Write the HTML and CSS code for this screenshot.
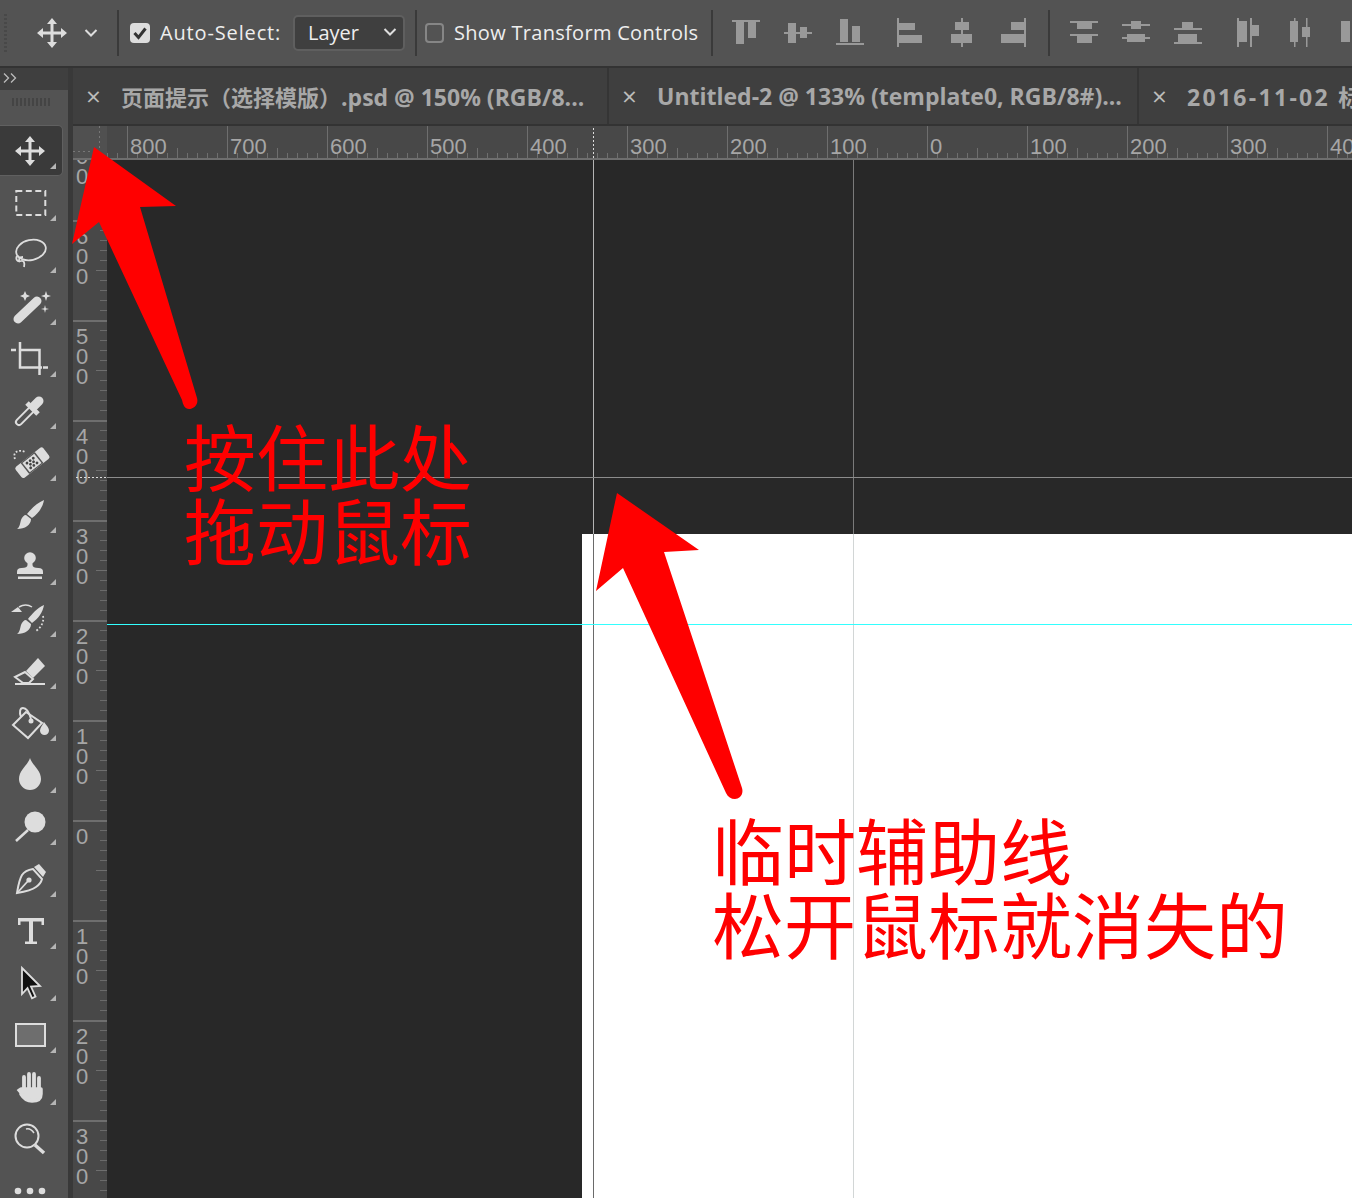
FILE: index.html
```html
<!DOCTYPE html>
<html lang="zh-CN">
<head>
    <meta charset="UTF-8">
    <meta name="viewport" content="width=device-width, initial-scale=1.0">
    <title>Photoshop guides</title>
    <link rel="stylesheet" href="styles.css">
</head>
<body>
<div class="app">

    <!-- options bar -->
    <div class="options">
        <div class="grip"></div>
        <svg class="opt-move" viewBox="0 0 30 30"><path d="M15 0l5 6h-3.500v7.500H24V10l6 5-6 5v-3.500h-7.500V24H20l-5 6-5-6h3.500v-7.500H6V20l-6-5 6-5v3.500h7.500V6H10z"/></svg>
        <svg class="opt-chevron" viewBox="0 0 14 10"><path d="M1.500 2l5.500 5.500L12.500 2" fill="none" stroke="#ddd" stroke-width="2"/></svg>
        <div class="sep sep-a"></div>
        <div class="check check-on"><svg viewBox="0 0 20 20"><path d="M4.500 10l4 4.500 7-9" fill="none" stroke="#333" stroke-width="3"/></svg></div>
        <span class="opt-label auto-label">Auto-Select:</span>
        <div class="select">
            <span>Layer</span>
            <svg viewBox="0 0 14 10"><path d="M1.500 2l5.500 5.500L12.500 2" fill="none" stroke="#ddd" stroke-width="2"/></svg>
        </div>
        <div class="sep sep-b"></div>
        <div class="check"></div>
        <span class="opt-label transform-label">Show Transform Controls</span>
        <div class="sep sep-c"></div>

        <div class="align-group group-a">
            <svg viewBox="0 0 30 30"><rect x="1" y="2" width="28" height="2"/><rect x="5" y="4" width="8" height="22"/><rect x="17" y="4" width="8" height="16"/></svg>
            <svg viewBox="0 0 30 30"><rect x="1" y="14" width="28" height="2"/><rect x="5" y="5" width="8" height="20"/><rect x="17" y="9" width="7" height="11"/></svg>
            <svg viewBox="0 0 30 30"><rect x="1" y="25" width="28" height="2"/><rect x="5" y="1" width="8" height="23"/><rect x="17" y="8" width="8" height="16"/></svg>
        </div>
        <div class="align-group group-b">
            <svg viewBox="0 0 30 30"><rect x="1" y="0" width="2" height="29"/><rect x="3" y="5" width="16" height="7"/><rect x="3" y="17" width="23" height="8"/></svg>
            <svg viewBox="0 0 30 30"><rect x="13" y="0" width="2" height="29"/><rect x="7" y="4" width="14" height="8"/><rect x="3" y="16" width="21" height="9"/></svg>
            <svg viewBox="0 0 30 30"><rect x="24" y="0" width="2" height="29"/><rect x="11" y="4" width="13" height="8"/><rect x="1" y="16" width="23" height="9"/></svg>
        </div>
        <div class="sep sep-d"></div>
        <div class="align-group group-c">
            <svg viewBox="0 0 30 30"><rect x="1" y="3" width="28" height="2"/><rect x="1" y="16" width="28" height="2"/><rect x="8" y="5" width="15" height="6"/><rect x="8" y="18" width="15" height="7"/></svg>
            <svg viewBox="0 0 30 30"><rect x="1" y="6" width="28" height="2"/><rect x="1" y="19" width="28" height="2"/><rect x="10" y="3" width="10" height="8"/><rect x="6" y="16" width="18" height="8"/></svg>
            <svg viewBox="0 0 30 30"><rect x="1" y="10" width="28" height="2"/><rect x="1" y="24" width="28" height="2"/><rect x="9" y="4" width="11" height="6"/><rect x="5" y="16" width="19" height="8"/></svg>
        </div>
        <div class="align-group group-d">
            <svg viewBox="0 0 30 30"><rect x="0" y="0" width="2" height="29"/><rect x="13" y="0" width="2" height="29"/><rect x="2" y="3" width="8" height="21"/><rect x="15" y="7" width="7" height="11"/></svg>
            <svg viewBox="0 0 30 30"><rect x="5" y="0" width="1.500" height="29"/><rect x="17" y="0" width="1.500" height="29"/><rect x="1" y="3" width="8" height="21"/><rect x="13" y="9" width="8" height="10"/></svg>
            <svg viewBox="0 0 30 30"><rect x="0" y="3" width="9" height="21"/></svg>
        </div>
    </div>

    <div class="main">
        <!-- tool column -->
        <div class="tools">
            <div class="tools-head"><svg viewBox="0 0 14 10"><path d="M1 .5L5.500 5 1 9.500M8 .5L12.500 5 8 9.500" fill="none" stroke="#bbb" stroke-width="1.300"/></svg></div>
            <div class="tools-grip"><div></div></div>

            <div class="tool active">
                <svg viewBox="0 0 40 40"><path d="M20 5l5 6h-3.500v7.500H29V15l6 5-6 5v-3.500h-7.500V29H25l-5 6-5-6h3.500v-7.500H11V25l-6-5 6-5v3.500h7.500V11H15z"/></svg>
            </div>
            <div class="tool">
                <svg viewBox="0 0 40 40"><rect x="6.300" y="8" width="29" height="24" fill="none" stroke="#ddd" stroke-width="2" stroke-dasharray="6 3.500"/></svg>
            </div>
            <div class="tool">
                <svg viewBox="0 0 40 40"><g fill="none" stroke="#ddd" stroke-width="1.800"><ellipse cx="21" cy="15" rx="15" ry="10" transform="rotate(-12 21 15)"/><path d="M7 21c-2 4 1 6 4 5s4 2 3 6M13 22c-4 0-5 3-3 5"/></g></svg>
            </div>
            <div class="tool">
                <svg viewBox="0 0 40 40"><path d="M8 32L27 14" fill="none" stroke="#ddd" stroke-width="9" stroke-linecap="round"/><path d="M15 4l1.500 3.500L20 9l-3.500 1.500L15 14l-1.500-3.500L10 9l3.500-1.500zM36 4l1.200 3.800 3.800 1.200-3.800 1.200L36 14l-1.200-3.800L31 9l3.800-1.200zM35 18l.8 3.200 3.200.8-3.200.8-.8 3.200-.8-3.200-3.200-.8 3.200-.8z"/></svg>
            </div>
            <div class="tool">
                <svg viewBox="0 0 40 40"><g fill="none" stroke="#ddd" stroke-width="2.500"><path d="M10 3v25.500h22M1 11h5M10 11h19.500v25M33 28.500h5"/></g></svg>
            </div>
            <div class="tool">
                <svg viewBox="0 0 40 40"><path d="M9 31L22 18" fill="none" stroke="#ddd" stroke-width="8" stroke-linecap="round"/><path d="M9 31L22 18" fill="none" stroke="#535353" stroke-width="4" stroke-linecap="round"/><path d="M17 12L28 23" fill="none" stroke="#ddd" stroke-width="5"/><path d="M24 15L29 10" fill="none" stroke="#ddd" stroke-width="9" stroke-linecap="round"/></svg>
            </div>
            <div class="tool">
                <svg viewBox="0 0 40 40"><g transform="rotate(-38 22 20)"><rect x="5" y="13" width="35" height="14" rx="2.500"/><rect x="13" y="13" width="18" height="14" fill="#535353"/><rect x="14.500" y="14" width="15" height="12" fill="#ddd"/><g fill="#444"><circle cx="18" cy="17" r="1.400"/><circle cx="22" cy="17" r="1.400"/><circle cx="26" cy="17" r="1.400"/><circle cx="18" cy="23" r="1.400"/><circle cx="22" cy="23" r="1.400"/><circle cx="26" cy="23" r="1.400"/><circle cx="20" cy="20" r="1.400"/><circle cx="24" cy="20" r="1.400"/></g></g><path d="M5 16C2 9 9 6 15 9" fill="none" stroke="#ddd" stroke-width="1.800" stroke-dasharray="1.800 1.800"/></svg>
            </div>
            <div class="tool">
                <svg viewBox="0 0 40 40"><path d="M34 5c-1 7-6 14-12 18l-5-4c4-5 10-11 17-14zM16 20l5 4c0 6-6 10-14 10 3-2 3-6 4-9 1-3 3-5 5-5z"/></svg>
            </div>
            <div class="tool">
                <svg viewBox="0 0 40 40"><circle cx="20" cy="11" r="5.800"/><path d="M17.500 14h5v4c0 2 2 3 6 3 3 0 4.500 1 4.500 4v2H7v-2c0-3 1.500-4 4.500-4 4 0 6-1 6-3z"/><rect x="8" y="29.500" width="24" height="2.500"/></svg>
            </div>
            <div class="tool">
                <svg viewBox="0 0 40 40"><path d="M34 6c-1 7-6 14-12 18l-4-4c4-5 9-11 16-14zM16 21l5 4c0 6-6 10-14 10 3-2 3-6 4-9 1-3 3-5 5-5z"/><path d="M1 13h11l-4-5z"/><path d="M9 8c5-3 10-2 13 0" fill="none" stroke="#ddd" stroke-width="1.500"/><path d="M33 17c1 5-1 11-7 15" fill="none" stroke="#ddd" stroke-width="1.800" stroke-dasharray="1.800 2"/></svg>
            </div>
            <div class="tool">
                <svg viewBox="0 0 40 40"><path d="M28 7l7 8-12 12-7-7z"/><path d="M15 21l8 7-4 4H13l-8-6z" fill="none" stroke="#ddd" stroke-width="2"/><rect x="5" y="32" width="30" height="2"/></svg>
            </div>
            <div class="tool">
                <svg viewBox="0 0 40 40"><path d="M16 9L3 22l15 13 14-15z" fill="none" stroke="#ddd" stroke-width="2"/><path d="M11 14c-2-5-1-9 2-9s6 4 8 11" fill="none" stroke="#ddd" stroke-width="2"/><circle cx="21" cy="18" r="2.500"/><path d="M34 19c3 4 5 6 5 8.500a4.500 4.500 0 0 1-9 0c0-2.500 2-4.500 4-8.500z"/></svg>
            </div>
            <div class="tool">
                <svg viewBox="0 0 40 40"><path d="M20 3c2 7 11 12 11 21a11 11 0 0 1-22 0c0-9 9-14 11-21z"/></svg>
            </div>
            <div class="tool">
                <svg viewBox="0 0 40 40"><circle cx="25" cy="15" r="10.500"/><path d="M18 23L6 34" fill="none" stroke="#ddd" stroke-width="2.500"/></svg>
            </div>
            <div class="tool">
                <svg viewBox="0 0 40 40"><path d="M23 10C17 11 14 13 12 16 9 21 8 28 7 34 13 33 22 31 26 28 29 26 31 24 32 20z" fill="none" stroke="#ddd" stroke-width="2"/><path d="M8 33L18 22" stroke="#ddd" stroke-width="1.800"/><circle cx="19" cy="21" r="2.600"/><path d="M24 8l5-3 7 8-3 5z"/></svg>
            </div>
            <div class="tool">
                <svg viewBox="0 0 40 40"><path d="M8 7h26v7h-2.500v-3.500H23v20h4V33H15v-2.500h4v-20h-8.500V14H8z"/></svg>
            </div>
            <div class="tool">
                <svg viewBox="0 0 40 40"><path d="M12 5l18 18-9 .6 4.500 10-3.500 1.600-4.500-10L12 31z" fill="#111" stroke="#ddd" stroke-width="1.800"/></svg>
            </div>
            <div class="tool">
                <svg viewBox="0 0 40 40"><rect x="6" y="9" width="29" height="22" fill="#6e6e6e" stroke="#ddd" stroke-width="2"/></svg>
            </div>
            <div class="tool">
                <svg viewBox="0 0 40 40"><path d="M14 10v12M19 7v15M24 7v15M29 11v13" fill="none" stroke="#ddd" stroke-width="3.800" stroke-linecap="round"/><path d="M8 22l5 6M11 22H31V27C31 32 27 34 22 34 17 34 14 32 11 27z" stroke="#ddd" stroke-width="3.500" stroke-linejoin="round"/></svg>
            </div>
            <div class="tool">
                <svg viewBox="0 0 40 40"><g fill="none" stroke="#ddd"><circle cx="17" cy="17" r="11.500" stroke-width="2"/><path d="M25 26l9 8" stroke-width="3.500"/><path d="M16 10c3-1 6 1 8 4" stroke-width="1.500"/></g></svg>
            </div>
            <div class="tool">
                <svg viewBox="0 0 40 40"><circle cx="8" cy="20" r="3.300"/><circle cx="20" cy="20" r="3.300"/><circle cx="32" cy="20" r="3.300"/></svg>
            </div>
        </div>
        <div class="divider"></div>

        <div class="workspace">
            <div class="tabs">
                <div class="tab tab-a"><span class="tab-x">&times;</span><span class="tab-title"><span class="tab-cjk">页面提示（选择模版）</span>.psd @ 150% (RGB/8...</span></div>
                <div class="tab tab-b"><span class="tab-x">&times;</span><span class="tab-title">Untitled-2 @ 133% (template0, RGB/8#)...</span></div>
                <div class="tab tab-c"><span class="tab-x">&times;</span><span class="tab-title">2016-11-02 标</span></div>
            </div>

            <div class="ruler-row">
                <div class="ruler-corner"></div>
                <div class="ruler-top">
                    <div class="mark"></div><div class="mark">800</div><div class="mark">700</div>
                    <div class="mark">600</div><div class="mark">500</div><div class="mark">400</div>
                    <div class="mark">300</div><div class="mark">200</div><div class="mark">100</div>
                    <div class="mark">0</div><div class="mark">100</div><div class="mark">200</div>
                    <div class="mark">300</div><div class="mark">400</div>
                </div>
            </div>

            <div class="canvas-row">
                <div class="ruler-left">
                    <div class="vmark"><span>700</span></div><div class="vmark"><span>600</span></div>
                    <div class="vmark"><span>500</span></div><div class="vmark"><span>400</span></div>
                    <div class="vmark"><span>300</span></div><div class="vmark"><span>200</span></div>
                    <div class="vmark"><span>100</span></div><div class="vmark"><span>0</span></div>
                    <div class="vmark"><span>100</span></div><div class="vmark"><span>200</span></div>
                    <div class="vmark"><span>300</span></div>
                </div>
                <div class="canvas">
                    <div class="doc"></div>
                </div>
            </div>
        </div>
    </div>

    <!-- guides and annotations sit over everything -->
    <div class="guide guide-v1"></div>
    <div class="guide guide-v2"></div>
    <div class="guide guide-h1"></div>
    <div class="guide guide-h2"></div>
    <div class="dots dots-top"></div>
    <div class="dots dots-left"></div>

    <svg class="arrows" viewBox="0 0 1352 1198">
        <path d="M94 147L176 206L140 207L197 398C199 405 193 409 189 409C185 409 183 405 182 400L99 222L72 244Z"/>
        <path d="M617 493L699 550L664 552L742 788C744 795 739 799 735 799C731 799 728 797 726 793L623 568L596 591Z"/>
    </svg>
    <div class="note note-a">按住此处<br>拖动鼠标</div>
    <div class="note note-b">临时辅助线<br>松开鼠标就消失的</div>
</div>
</body>
</html>
```

FILE: styles.css
```css
* {
    box-sizing: border-box;
}
body {
    margin: 0;
    background-color: #282828;
    font-family: "Open Sans", "Noto Sans CJK SC", sans-serif;
}
svg {
    display: block;
    flex-shrink: 0;
}
.app {
    position: relative;
    width: 1352px;
    height: 1198px;
    overflow: hidden;
}

/* options bar */
.options {
    display: flex;
    align-items: center;
    height: 68px;
    border-bottom: 2px solid #333;
    background-color: #535353;
    color: #eee;
    overflow: hidden;
}
.options > * {
    flex-shrink: 0;
}
.options svg {
    fill: #999;
}
.grip {
    width: 3px;
    height: 38px;
    margin-left: 4px;
    background: repeating-linear-gradient(#484848 0 2px, transparent 2px 4px);
}
.opt-move {
    width: 30px;
    height: 30px;
    margin-left: 30px;
}
.options .opt-move {
    fill: #ddd;
}
.opt-chevron {
    width: 14px;
    height: 10px;
    margin-left: 17px;
}
.sep {
    width: 2px;
    height: 46px;
    background-color: #3a3a3a;
}
.sep-a { margin-left: 19px; }
.sep-b { margin-left: 10px; }
.sep-c { margin-left: 13px; }
.sep-d { margin-left: 18px; }
.check {
    width: 19px;
    height: 20px;
    margin-left: 8px;
    border: 2px solid #868686;
    border-radius: 4px;
}
.check-on {
    width: 20px;
    margin-left: 11px;
    border: 0;
    background-color: #ddd;
}
.opt-label {
    margin-left: 10px;
    padding-bottom: 2px;
    font-size: 20px;
    white-space: nowrap;
}
.auto-label {
    width: 122px;
    letter-spacing: 0.85px;
}
.transform-label {
    width: 244px;
    letter-spacing: 0.3px;
}
.select {
    display: flex;
    align-items: center;
    justify-content: space-between;
    width: 112px;
    height: 36px;
    margin-left: 11px;
    padding: 0 6px 2px 13px;
    border: 2px solid #5f5f5f;
    border-radius: 5px;
    background-color: #3f3f3f;
    font-size: 20px;
}
.select svg {
    width: 14px;
    height: 10px;
}
.align-group {
    display: flex;
    gap: 22px;
}
.align-group svg {
    width: 30px;
    height: 30px;
    overflow: visible;
}
.group-a { margin-left: 18px; }
.group-b { margin-left: 31px; }
.group-c { margin-left: 19px; }
.group-d { margin-left: 34px; }

/* tool column */
.main {
    display: flex;
    height: 1130px;
}
.tools {
    width: 68px;
    flex-shrink: 0;
    background-color: #535353;
    overflow: hidden;
}
.divider {
    width: 5px;
    flex-shrink: 0;
    background-color: #393939;
}
.tools-head {
    height: 22px;
    padding: 5px 0 0 3px;
    background-color: #3f3f3f;
}
.tools-head svg {
    width: 14px;
    height: 10px;
}
.tools-grip {
    height: 35px;
    padding: 8px 0 0 12px;
}
.tools-grip div {
    width: 38px;
    height: 8px;
    background: repeating-linear-gradient(90deg, #444 0 2px, transparent 2px 4px);
}
.tool {
    position: relative;
    height: 52px;
    padding: 6px 0 0 10px;
}
.tool svg {
    width: 40px;
    height: 40px;
    fill: #ddd;
    overflow: visible;
}
.tool::after {
    content: "";
    position: absolute;
    left: 50px;
    top: 38px;
    width: 6px;
    height: 6px;
    background-color: #b5b5b5;
    clip-path: polygon(100% 0, 100% 100%, 0 100%);
}
.tool:last-child::after,
.tool:nth-last-child(2)::after {
    display: none;
}
.tool.active {
    width: 63px;
    height: 51px;
    margin-bottom: 1px;
    border: 1px solid #606060;
    border-left: 0;
    border-radius: 0 5px 5px 0;
    padding: 5px 0 0 10px;
    background-color: #3a3a3a;
}
.tool.active::after {
    top: 37px;
}

/* document tabs */
.workspace {
    flex: 1;
    min-width: 0;
    display: flex;
    flex-direction: column;
}
.tabs {
    display: flex;
    height: 58px;
    flex-shrink: 0;
    border-bottom: 2px solid #333;
    background-color: #3f3f3f;
    color: #a8a8a8;
    font-weight: 700;
    font-size: 23px;
}
.tab {
    display: flex;
    align-items: center;
    flex-shrink: 0;
    padding-left: 13px;
    border-right: 2px solid #353535;
    white-space: nowrap;
    overflow: hidden;
}
.tab-a { width: 536px; }
.tab-b { width: 530px; }
.tab-c {
    flex: 1;
    flex-shrink: 1;
    min-width: 0;
    border-right: 0;
    letter-spacing: 2.300px;
}
.tab-cjk {
    font-size: 22px;
}
.tab-x {
    flex-shrink: 0;
    width: 35px;
    font-size: 26px;
    font-weight: 400;
    letter-spacing: 0;
    color: #bbb;
}
.tab-title {
    flex-shrink: 0;
}

/* rulers */
.ruler-row {
    display: flex;
    height: 34px;
    flex-shrink: 0;
    background-color: #484848;
}
.ruler-corner {
    width: 34px;
    flex-shrink: 0;
    border-bottom: 2px solid #6e6e6e;
    background-color: #505050;
    background-image:
        repeating-linear-gradient(#777 0 2px, transparent 2px 5px),
        repeating-linear-gradient(90deg, #777 0 2px, transparent 2px 5px);
    background-repeat: no-repeat;
    background-size: 1px 25px, 26px 1px;
    background-position: 26px 0, 0 25px;
}
.ruler-top {
    flex: 1;
    min-width: 0;
    display: flex;
    overflow: hidden;
    border-bottom: 2px solid #6e6e6e;
}
.mark {
    width: 100px;
    flex-shrink: 0;
    padding: 9px 0 0 3px;
    color: #a6a6a6;
    font-family: "Liberation Sans", sans-serif;
    font-size: 22px;
    line-height: 24px;
    background-image:
        linear-gradient(#6e6e6e, #6e6e6e),
        linear-gradient(#6e6e6e, #6e6e6e),
        linear-gradient(90deg, #6e6e6e 1px, transparent 1px);
    background-repeat: no-repeat, no-repeat, repeat-x;
    background-size: 1px 100%, 1px 10px, 10px 5px;
    background-position: 0 0, 50px 100%, 0 100%;
}
.mark:first-child {
    margin-left: -80px;
}
.canvas-row {
    flex: 1;
    min-height: 0;
    display: flex;
}
.ruler-left {
    width: 34px;
    flex-shrink: 0;
    overflow: hidden;
    background-color: #484848;
}
.vmark {
    height: 100px;
    padding: 7px 0 0 3px;
    color: #a6a6a6;
    font-family: "Liberation Sans", sans-serif;
    font-size: 22px;
    line-height: 20px;
    background-image:
        linear-gradient(#6e6e6e, #6e6e6e),
        linear-gradient(#6e6e6e, #6e6e6e),
        linear-gradient(#6a6a6a 1px, transparent 1px);
    background-repeat: no-repeat, no-repeat, repeat-y;
    background-size: 100% 2px, 11px 1px, 7px 10px;
    background-position: 0 0, 100% 50px, 100% 0;
}
.vmark:first-child {
    margin-top: -40px;
}
.vmark span {
    display: block;
    width: 13px;
    word-break: break-all;
}
.canvas {
    flex: 1;
    min-width: 0;
    background-color: #282828;
    padding: 374px 0 0 475px;
}
.doc {
    height: 100%;
    background-color: #fff;
}

/* overlays */
.guide {
    position: absolute;
}
.guide-v1 {
    left: 593px;
    top: 160px;
    width: 1px;
    height: 1038px;
    background: linear-gradient(#b4b4b4 374px, #6a6a6a 374px);
}
.guide-v2 {
    left: 853px;
    top: 160px;
    width: 1px;
    height: 1038px;
    background: linear-gradient(#7a7a7a 374px, #d2d6d6 374px);
}
.guide-h1 {
    left: 107px;
    top: 477px;
    width: 1245px;
    height: 1px;
    background-color: #8c8c8c;
}
.guide-h2 {
    left: 107px;
    top: 624px;
    width: 1245px;
    height: 1px;
    background-color: #3ff;
}
.dots {
    position: absolute;
}
.dots-top {
    left: 593px;
    top: 128px;
    width: 1px;
    height: 30px;
    background: repeating-linear-gradient(#ddd 0 2px, transparent 2px 4px);
}
.dots-left {
    left: 76px;
    top: 477px;
    width: 31px;
    height: 1px;
    background: repeating-linear-gradient(90deg, #ddd 0 2px, transparent 2px 4px);
}
.arrows {
    position: absolute;
    left: 0;
    top: 0;
    width: 1352px;
    height: 1198px;
    fill: #f00;
}
.note {
    position: absolute;
    color: #f00;
    font-family: "Noto Sans CJK SC", sans-serif;
    font-size: 72px;
    line-height: 74px;
    white-space: nowrap;
}
.note-a {
    left: 184px;
    top: 417px;
}
.note-b {
    left: 712px;
    top: 811px;
}
```
